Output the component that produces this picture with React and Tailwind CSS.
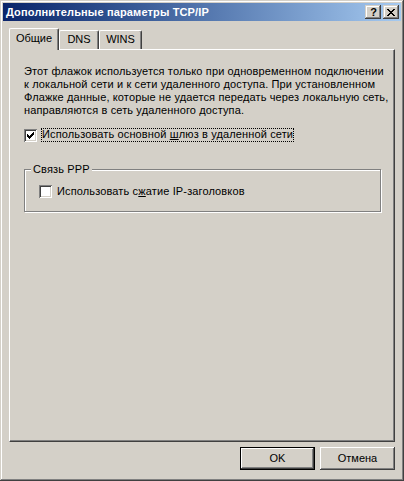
import React from 'react';

const font = { fontFamily: '"Liberation Sans", Arial, sans-serif' };

const raised = 'shadow-[inset_-1px_-1px_#404040,inset_1px_1px_#ffffff,inset_-2px_-2px_#808080,inset_2px_2px_#d4d0c8]';
const captionBtn = 'shadow-[inset_-1px_-1px_#404040,inset_1px_1px_#d4d0c8,inset_-2px_-2px_#808080,inset_2px_2px_#ffffff]';
const sunken = 'shadow-[inset_1px_1px_#808080,inset_-1px_-1px_#ffffff,inset_2px_2px_#404040,inset_-2px_-2px_#d4d0c8]';

const CheckBox = ({ checked }) => (
  <div className={`w-[13px] h-[13px] bg-white shrink-0 ${sunken} flex items-center justify-center`}>
    {checked && (
      <svg width="7" height="7" viewBox="0 0 7 7" shapeRendering="crispEdges">
        <path d="M6 0h1v3h-1zM5 1h1v3h-1zM4 2h1v3h-1zM3 3h1v3h-1zM2 4h1v3h-1zM1 3h1v3h-1zM0 2h1v3h-1z" fill="#000" />
      </svg>
    )}
  </div>
);

const Tab = ({ label, active, width }) => (
  <div
    className={`${width} flex justify-center relative ${active ? 'h-[22px] z-10 pt-[3px]' : 'h-[19px] mt-[2px] pt-[2px]'} bg-[#d4d0c8] rounded-t-[2px] border-l border-t border-l-white border-t-white shadow-[inset_-1px_0_#808080] border-r border-r-[#404040]`}
  >
    <span className="text-[11px] leading-[13px] text-black">{label}</span>
  </div>
);

export default function App() {
  return (
    <div
      style={font}
      className="w-[404px] h-[481px] bg-[#d4d0c8] p-[3px] flex flex-col shadow-[inset_-1px_-1px_#404040,inset_1px_1px_#d4d0c8,inset_-2px_-2px_#808080,inset_2px_2px_#ffffff] select-none"
    >
      {/* Title bar */}
      <div className="h-[18px] bg-linear-to-r from-[#0a246a] to-[#a6caf0] flex items-center pl-[3px] pr-[2px] shrink-0">
        <span className="text-white font-bold text-[11px] leading-[13px] tracking-[0.15px] flex-1 whitespace-nowrap">
          Дополнительные параметры TCP/IP
        </span>
        <div className="flex gap-[2px]">
          <div className={`w-[16px] h-[14px] bg-[#d4d0c8] ${captionBtn} flex items-center justify-center`}>
            <span className="text-black font-bold text-[11px] leading-none pl-[1px]">?</span>
          </div>
          <div className={`w-[16px] h-[14px] bg-[#d4d0c8] ${captionBtn} flex items-center justify-center`}>
            <svg width="8" height="7" viewBox="0 0 8 7" shapeRendering="crispEdges">
              <path d="M0 0h2v1h-2zM6 0h2v1h-2zM1 1h2v1h-2zM5 1h2v1h-2zM2 2h4v1h-4zM3 3h2v1h-2zM2 4h4v1h-4zM1 5h2v1h-2zM5 5h2v1h-2zM0 6h2v1h-2zM6 6h2v1h-2z" fill="#000" />
            </svg>
          </div>
        </div>
      </div>

      {/* Body */}
      <div className="flex flex-col px-[6px] pt-[7px]">
        <div className="flex h-[21px] items-start">
          <Tab label="Общие" active width="w-[50px]" />
          <Tab label="DNS" width="w-[40px]" />
          <Tab label="WINS" width="w-[43px]" />
        </div>

        <div className="h-[393px] border-t border-l border-t-white border-l-white border-r border-b border-r-[#404040] border-b-[#404040] shadow-[inset_-1px_-1px_#808080] pl-[14px] pt-[15px] text-[11px] leading-[13px] tracking-[0.13px] text-black">
          <p className="whitespace-nowrap">
            Этот флажок используется только при одновременном подключении<br />
            к локальной сети и к сети удаленного доступа. При установленном<br />
            Флажке данные, которые не удается передать через локальную сеть,<br />
            направляются в сеть удаленного доступа.
          </p>

          <div className="flex items-center mt-[11px] h-[14px]">
            <CheckBox checked />
            <span className="ml-[4px] px-[1px] h-[14px] leading-[13px] outline outline-1 outline-dotted outline-black -outline-offset-1 whitespace-nowrap">
              Использовать основной <u>ш</u>люз в удаленной сети
            </span>
          </div>

          <div className="relative mt-[27px] w-[357px] h-[43px] border border-[#808080] shadow-[inset_1px_1px_#ffffff,1px_1px_#ffffff]">
            <span className="absolute left-[6px] -top-[7px] bg-[#d4d0c8] px-[2px] whitespace-nowrap">Связь PPP</span>
            <div className="flex items-center ml-[14px] mt-[15px]">
              <CheckBox />
              <span className="ml-[5px] whitespace-nowrap">
                Использовать с<u>ж</u>атие IP-заголовков
              </span>
            </div>
          </div>
        </div>

        <div className="flex justify-end gap-[5px] mt-[5px] text-[11px] text-black">
          <div className="w-[75px] h-[23px] border border-black">
            <div className={`w-full h-full ${raised} flex items-center justify-center`}>OK</div>
          </div>
          <div className={`w-[75px] h-[23px] ${raised} flex items-center justify-center`}>Отмена</div>
        </div>
      </div>
    </div>
  );
}
